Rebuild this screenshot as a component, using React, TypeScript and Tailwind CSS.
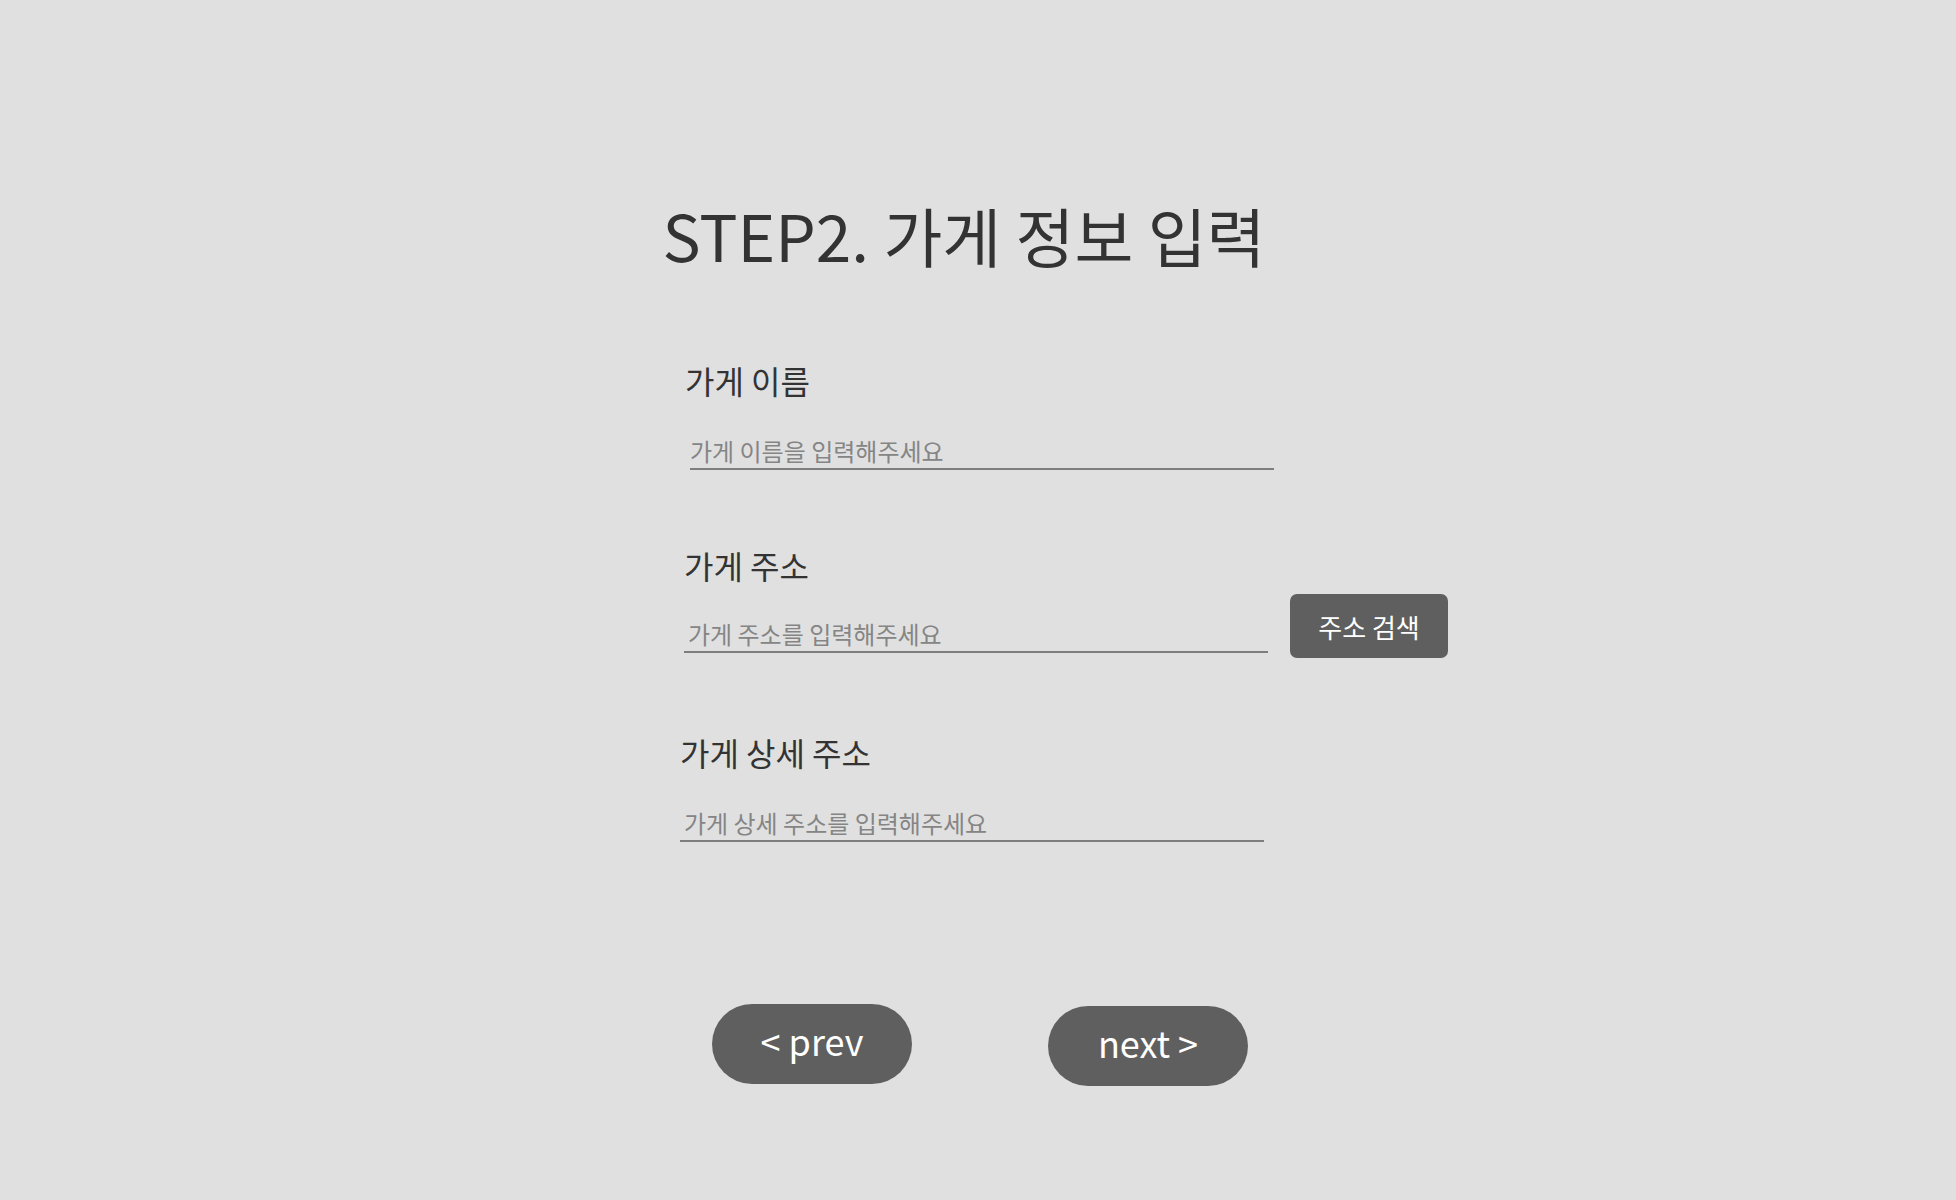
import { useState } from 'react';

interface FieldProps {
  label: string;
  placeholder: string;
  value: string;
  onChange: (v: string) => void;
  labelOffset: string;
  inputOffset: string;
}

function Field({ label, placeholder, value, onChange, labelOffset, inputOffset }: FieldProps) {
  return (
    <div className="flex flex-col">
      <label className={`h-[40px] text-[32px] leading-[40px] text-[#333333] ${labelOffset}`}>{label}</label>
      <input
        value={value}
        onChange={e => onChange(e.target.value)}
        placeholder={placeholder}
        className={`mt-[34px] h-[36px] w-[584px] border-b-2 border-[#7e7e7e] bg-transparent text-[24px] text-[#333333] outline-none placeholder:text-[#858585] ${inputOffset}`}
      />
    </div>
  );
}

export default function App() {
  const [name, setName] = useState('');
  const [address, setAddress] = useState('');
  const [detail, setDetail] = useState('');

  return (
    <div className="min-h-screen w-full bg-[#e0e0e0] font-['Noto_Sans_CJK_KR',sans-serif]">
      {/* Title */}
      <div className="pt-[194px]">
        <h1 className="h-[80px] pr-[28px] text-center text-[64px] leading-[80px] text-[#333333]">
          STEP2. 가게 정보 입력
        </h1>
      </div>

      <div className="mx-auto mt-[86px] w-[600px] pl-[2px]">
        {/* 가게 이름 */}
        <Field
          label="가게 이름"
          placeholder="가게 이름을 입력해주세요"
          value={name}
          onChange={setName}
          labelOffset="ml-[5px]"
          inputOffset="ml-[10px] px-0"
        />

        {/* 가게 주소 */}
        <div className="mt-[75px] ml-[4px] flex flex-col">
          <label className="h-[40px] text-[32px] leading-[40px] text-[#333333]">가게 주소</label>
          <div className="mt-[9px] flex items-start gap-[22px]">
            <input
              value={address}
              onChange={e => setAddress(e.target.value)}
              placeholder="가게 주소를 입력해주세요"
              className="mt-[23px] h-[36px] w-[584px] shrink-0 border-b-2 border-[#7e7e7e] bg-transparent pl-[4px] text-[24px] text-[#333333] outline-none placeholder:text-[#858585]"
            />
            <button className="h-[64px] w-[158px] shrink-0 rounded-[7px] bg-[#5f5f5f] text-[26px] text-white">
              주소 검색
            </button>
          </div>
        </div>

        {/* 가게 상세 주소 */}
        <div className="mt-[74px]">
          <Field
            label="가게 상세 주소"
            placeholder="가게 상세 주소를 입력해주세요"
            value={detail}
            onChange={setDetail}
            labelOffset=""
            inputOffset="pl-[4px]"
          />
        </div>
      </div>

      {/* Navigation */}
      <div className="mt-[162px] ml-[4px] flex justify-center gap-[136px]">
        <button className="h-[80px] w-[200px] rounded-full bg-[#5f5f5f] pb-[8px] text-[36px] leading-[72px] text-white">
          &lt; prev
        </button>
        <button className="mt-[2px] h-[80px] w-[200px] rounded-full bg-[#5f5f5f] pb-[7px] text-[36px] leading-[73px] text-white">
          next &gt;
        </button>
      </div>
    </div>
  );
}
